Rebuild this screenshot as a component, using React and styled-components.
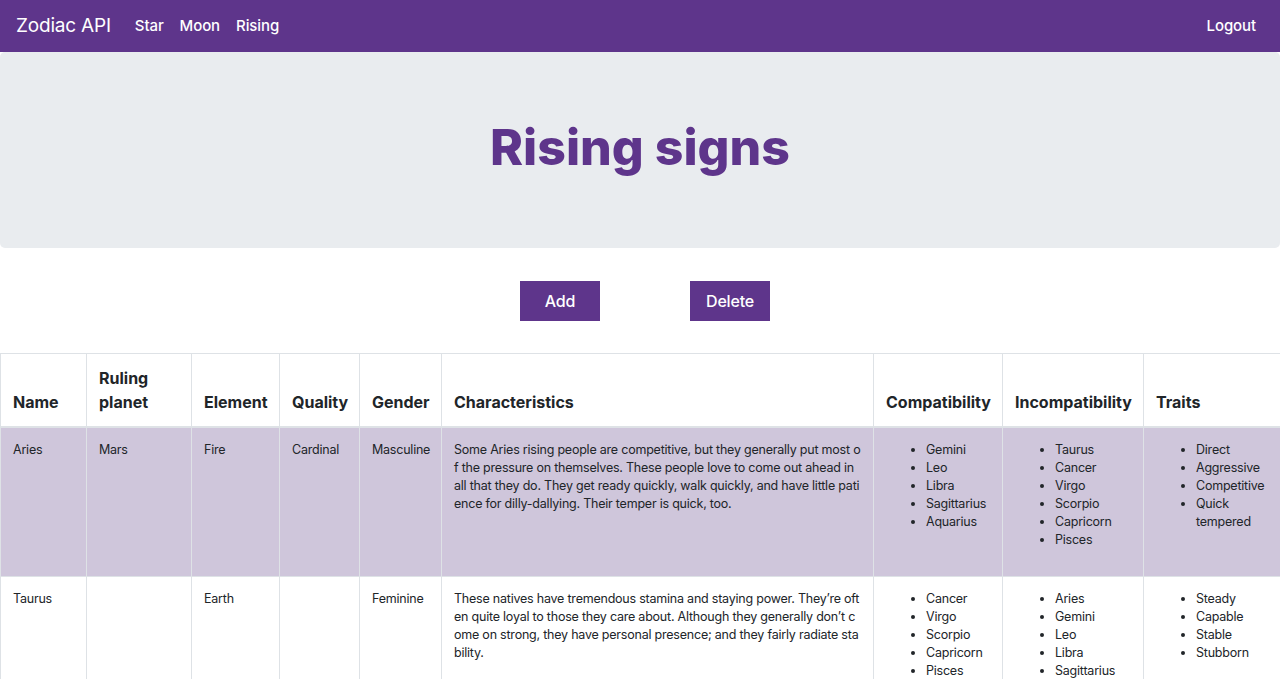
import React from "react";
import styled, { createGlobalStyle } from "styled-components";

const Global = createGlobalStyle`
  html, body { margin: 0; padding: 0; background: #fff; }
  body {
    font-family: Inter, "Noto Sans", "Liberation Sans", sans-serif;
    color: #212529;
    font-size: 16px;
    line-height: 1.5;
  }
  * { box-sizing: border-box; }
`;

const PURPLE = "#5e358b";

const Navbar = styled.nav`
  height: 52px;
  background: ${PURPLE};
  display: flex;
  align-items: center;
  padding: 0 16px;
`;

const Brand = styled.a`
  color: #fff;
  font-size: 19px;
  margin-right: 16px;
  letter-spacing: -0.2px;
`;

const NavLinks = styled.div`
  display: flex;
  flex: 1;
`;

const NavLink = styled.a`
  color: #fff;
  font-size: 15px;
  padding: 0 8px;
  font-weight: 500;
  letter-spacing: -0.1px;
`;

const Jumbotron = styled.header`
  background: #e9ecef;
  border-radius: 5px;
  height: 196px;
  display: flex;
  align-items: center;
  justify-content: center;
`;

const Title = styled.h1`
  margin: 0 0 6px;
  color: ${PURPLE};
  font-size: 50px;
  font-weight: 800;
  letter-spacing: 0;
`;

const Actions = styled.div`
  display: flex;
  justify-content: center;
  gap: 90px;
  padding: 33px 0 32px 10px;
`;

const Button = styled.button`
  width: 80px;
  height: 40px;
  background: ${PURPLE};
  color: #fff;
  border: none;
  font-family: inherit;
  font-size: 16px;
  font-weight: 500;
  letter-spacing: -0.2px;
`;

const Table = styled.table`
  width: 1280px;
  table-layout: fixed;
  border-collapse: collapse;
`;

const Th = styled.th`
  border: 1px solid #dee2e6;
  border-bottom: 2px solid #dee2e6;
  padding: 12px;
  text-align: left;
  vertical-align: bottom;
  font-size: 16px;
  line-height: 24px;
  font-weight: 700;
`;

const Tr = styled.tr`
  background: ${(p) => (p.$striped ? "#cfc6db" : "#fff")};
`;

const Td = styled.td`
  border: 1px solid #dee2e6;
  padding: 13px 12px 11px;
  vertical-align: top;
  font-size: 12.5px;
  letter-spacing: -0.22px;
  line-height: 18px;
  word-break: ${(p) => (p.$breakAll ? "break-all" : "normal")};
`;

const List = styled.ul`
  margin: 0 0 16px;
  padding-left: 40px;
`;

const widths = [86, 105, 88, 80, 82, 432, 129, 141, 137];
const headers = [
  "Name",
  "Ruling planet",
  "Element",
  "Quality",
  "Gender",
  "Characteristics",
  "Compatibility",
  "Incompatibility",
  "Traits",
];

const rows = [
  {
    name: "Aries",
    planet: "Mars",
    element: "Fire",
    quality: "Cardinal",
    gender: "Masculine",
    text:
      "Some Aries rising people are competitive, but they generally put most of the pressure on themselves. These people love to come out ahead in all that they do. They get ready quickly, walk quickly, and have little patience for dilly-dallying. Their temper is quick, too.",
    compat: ["Gemini", "Leo", "Libra", "Sagittarius", "Aquarius"],
    incompat: ["Taurus", "Cancer", "Virgo", "Scorpio", "Capricorn", "Pisces"],
    traits: ["Direct", "Aggressive", "Competitive", "Quick tempered"],
  },
  {
    name: "Taurus",
    planet: "",
    element: "Earth",
    quality: "",
    gender: "Feminine",
    text:
      "These natives have tremendous stamina and staying power. They\u2019re often quite loyal to those they care about. Although they generally don\u2019t come on strong, they have personal presence; and they fairly radiate stability.",
    compat: ["Cancer", "Virgo", "Scorpio", "Capricorn", "Pisces"],
    incompat: ["Aries", "Gemini", "Leo", "Libra", "Sagittarius", "Aquarius"],
    traits: ["Steady", "Capable", "Stable", "Stubborn"],
  },
];

export default function App() {
  return (
    <>
      <Global />
      <Navbar>
        <Brand>Zodiac API</Brand>
        <NavLinks>
          <NavLink>Star</NavLink>
          <NavLink>Moon</NavLink>
          <NavLink>Rising</NavLink>
        </NavLinks>
        <NavLink>Logout</NavLink>
      </Navbar>
      <Jumbotron>
        <Title>Rising signs</Title>
      </Jumbotron>
      <Actions>
        <Button>Add</Button>
        <Button>Delete</Button>
      </Actions>
      <Table>
        <colgroup>
          {widths.map((w, i) => (
            <col key={i} style={{ width: w }} />
          ))}
        </colgroup>
        <thead>
          <tr>
            {headers.map((h) => (
              <Th key={h}>{h}</Th>
            ))}
          </tr>
        </thead>
        <tbody>
          {rows.map((r, i) => (
            <Tr key={r.name} $striped={i % 2 === 0}>
              <Td>{r.name}</Td>
              <Td>{r.planet}</Td>
              <Td>{r.element}</Td>
              <Td>{r.quality}</Td>
              <Td>{r.gender}</Td>
              <Td $breakAll>{r.text}</Td>
              <Td>
                <List>
                  {r.compat.map((c) => (
                    <li key={c}>{c}</li>
                  ))}
                </List>
              </Td>
              <Td>
                <List>
                  {r.incompat.map((c) => (
                    <li key={c}>{c}</li>
                  ))}
                </List>
              </Td>
              <Td>
                <List>
                  {r.traits.map((c) => (
                    <li key={c}>{c}</li>
                  ))}
                </List>
              </Td>
            </Tr>
          ))}
        </tbody>
      </Table>
    </>
  );
}
